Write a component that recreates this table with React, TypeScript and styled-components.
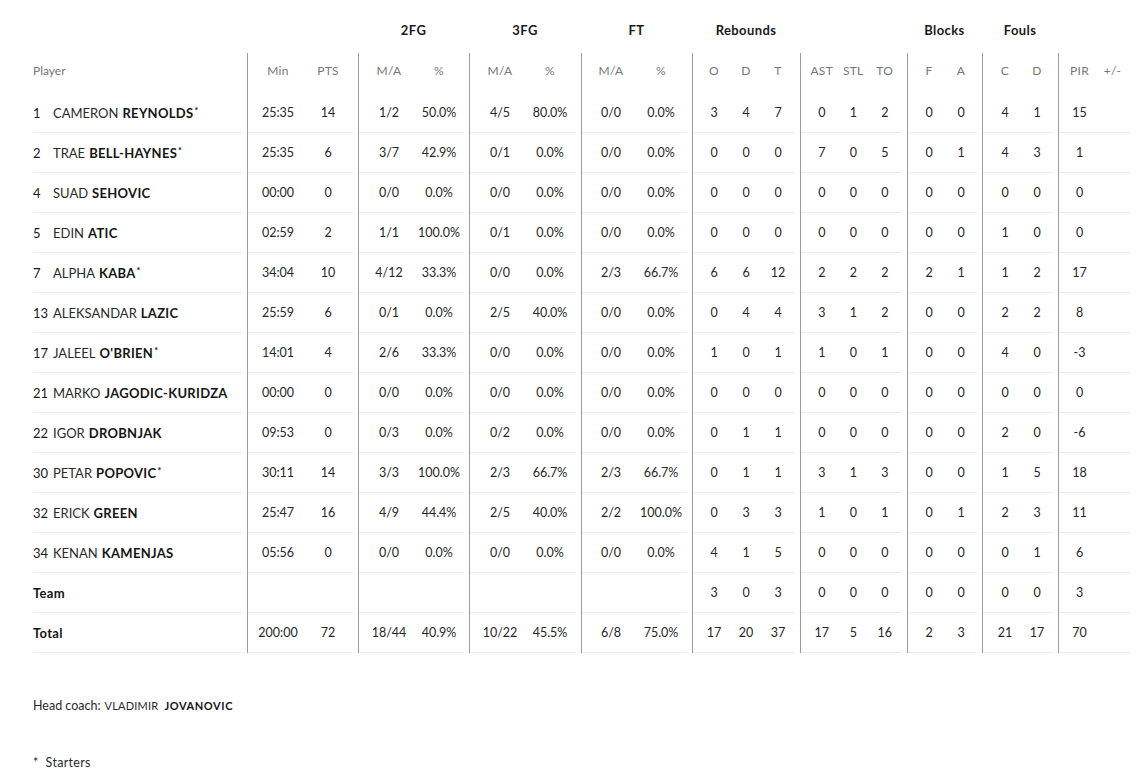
import React from "react";
import styled, { createGlobalStyle } from "styled-components";

const Global = createGlobalStyle`
  html, body { margin: 0; padding: 0; background: #fff; }
  body { font-family: Lato, "Noto Sans", "Liberation Sans", sans-serif; color: #1d1d1d; }
`;

type GroupDef = { label: string; w: number; cw: number; pl: number; cols: string[]; last?: boolean };

const groups: GroupDef[] = [
  { label: "", w: 111, cw: 50, pl: 5, cols: ["Min", "PTS"] },
  { label: "2FG", w: 111, cw: 50, pl: 5, cols: ["M/A", "%"] },
  { label: "3FG", w: 112, cw: 50, pl: 5, cols: ["M/A", "%"] },
  { label: "FT", w: 111, cw: 50, pl: 4, cols: ["M/A", "%"] },
  { label: "Rebounds", w: 108, cw: 32, pl: 5, cols: ["O", "D", "T"] },
  { label: "", w: 107, cw: 31.5, pl: 5, cols: ["AST", "STL", "TO"] },
  { label: "Blocks", w: 75, cw: 32, pl: 5, cols: ["F", "A"] },
  { label: "Fouls", w: 76, cw: 32, pl: 6, cols: ["C", "D"] },
  { label: "", w: 73, cw: 33, pl: 4, cols: ["PIR", "+/-"], last: true },
];

type Player = { no: string; first: string; last: string; starter?: boolean; v: string[] };

const players: Player[] = [
  { no: "1", first: "CAMERON", last: "REYNOLDS", starter: true, v: ["25:35", "14", "1/2", "50.0%", "4/5", "80.0%", "0/0", "0.0%", "3", "4", "7", "0", "1", "2", "0", "0", "4", "1", "15", ""] },
  { no: "2", first: "TRAE", last: "BELL-HAYNES", starter: true, v: ["25:35", "6", "3/7", "42.9%", "0/1", "0.0%", "0/0", "0.0%", "0", "0", "0", "7", "0", "5", "0", "1", "4", "3", "1", ""] },
  { no: "4", first: "SUAD", last: "SEHOVIC", v: ["00:00", "0", "0/0", "0.0%", "0/0", "0.0%", "0/0", "0.0%", "0", "0", "0", "0", "0", "0", "0", "0", "0", "0", "0", ""] },
  { no: "5", first: "EDIN", last: "ATIC", v: ["02:59", "2", "1/1", "100.0%", "0/1", "0.0%", "0/0", "0.0%", "0", "0", "0", "0", "0", "0", "0", "0", "1", "0", "0", ""] },
  { no: "7", first: "ALPHA", last: "KABA", starter: true, v: ["34:04", "10", "4/12", "33.3%", "0/0", "0.0%", "2/3", "66.7%", "6", "6", "12", "2", "2", "2", "2", "1", "1", "2", "17", ""] },
  { no: "13", first: "ALEKSANDAR", last: "LAZIC", v: ["25:59", "6", "0/1", "0.0%", "2/5", "40.0%", "0/0", "0.0%", "0", "4", "4", "3", "1", "2", "0", "0", "2", "2", "8", ""] },
  { no: "17", first: "JALEEL", last: "O'BRIEN", starter: true, v: ["14:01", "4", "2/6", "33.3%", "0/0", "0.0%", "0/0", "0.0%", "1", "0", "1", "1", "0", "1", "0", "0", "4", "0", "-3", ""] },
  { no: "21", first: "MARKO", last: "JAGODIC-KURIDZA", v: ["00:00", "0", "0/0", "0.0%", "0/0", "0.0%", "0/0", "0.0%", "0", "0", "0", "0", "0", "0", "0", "0", "0", "0", "0", ""] },
  { no: "22", first: "IGOR", last: "DROBNJAK", v: ["09:53", "0", "0/3", "0.0%", "0/2", "0.0%", "0/0", "0.0%", "0", "1", "1", "0", "0", "0", "0", "0", "2", "0", "-6", ""] },
  { no: "30", first: "PETAR", last: "POPOVIC", starter: true, v: ["30:11", "14", "3/3", "100.0%", "2/3", "66.7%", "2/3", "66.7%", "0", "1", "1", "3", "1", "3", "0", "0", "1", "5", "18", ""] },
  { no: "32", first: "ERICK", last: "GREEN", v: ["25:47", "16", "4/9", "44.4%", "2/5", "40.0%", "2/2", "100.0%", "0", "3", "3", "1", "0", "1", "0", "1", "2", "3", "11", ""] },
  { no: "34", first: "KENAN", last: "KAMENJAS", v: ["05:56", "0", "0/0", "0.0%", "0/0", "0.0%", "0/0", "0.0%", "4", "1", "5", "0", "0", "0", "0", "0", "0", "1", "6", ""] },
];

const teamRow = ["", "", "", "", "", "", "", "", "3", "0", "3", "0", "0", "0", "0", "0", "0", "0", "3", ""];
const totalRow = ["200:00", "72", "18/44", "40.9%", "10/22", "45.5%", "6/8", "75.0%", "17", "20", "37", "17", "5", "16", "2", "3", "21", "17", "70", ""];

const Page = styled.div`
  padding: 10px 0 0 33px;
  width: 1139px;
  box-sizing: border-box;
`;

const Table = styled.div`
  display: flex;
  flex-direction: column;
`;

const TitleRow = styled.div`
  display: flex;
  height: 40px;
  margin-bottom: 3px;
`;

const TitleSpacer = styled.div`
  width: 214px;
`;

const GroupTitle = styled.div<{ $w: number }>`
  width: ${(p) => p.$w}px;
  display: flex;
  align-items: center;
  justify-content: center;
  font-size: 13px;
  font-weight: 700;
  letter-spacing: 0.4px;
  color: #1a1a1a;
`;

const Row = styled.div`
  display: flex;
  height: 40px;
`;

const PlayerCell = styled.div`
  width: 214px;
  padding-right: 5px;
  box-sizing: border-box;
`;

const Inner = styled.div<{ $lined: boolean; $pl?: number }>`
  height: 100%;
  box-sizing: border-box;
  display: flex;
  align-items: center;
  padding-left: ${(p) => p.$pl ?? 0}px;
  padding-bottom: ${(p) => (p.$lined ? 0 : 4)}px;
  border-bottom: 1px solid ${(p) => (p.$lined ? "#ededed" : "transparent")};
`;

const Group = styled.div<{ $w: number; $last?: boolean }>`
  width: ${(p) => p.$w}px;
  border-left: 1px solid #9c9c9c;
  padding-right: ${(p) => (p.$last ? 0 : 5)}px;
  box-sizing: border-box;
`;

const Cell = styled.div<{ $w: number; $head?: boolean }>`
  width: ${(p) => p.$w}px;
  flex: none;
  text-align: center;
  white-space: nowrap;
  font-size: ${(p) => (p.$head ? 12 : 12.5)}px;
  color: ${(p) => (p.$head ? "#777" : "#262626")};
  letter-spacing: ${(p) => (p.$head ? "0.3px" : "0")};
`;

const HeadLabel = styled.span`
  font-size: 12px;
  color: #777;
`;

const Num = styled.span`
  display: inline-block;
  width: 20px;
  font-size: 13px;
  color: #1a1a1a;
`;

const First = styled.span`
  font-size: 13px;
  color: #2a2a2a;
`;

const Last = styled.span`
  font-size: 13px;
  font-weight: 700;
  color: #151515;
  letter-spacing: 0.3px;
  margin-left: 4px;
`;

const Star = styled.sup`
  font-size: 9px;
  font-weight: 700;
  vertical-align: 4px;
  line-height: 0;
  margin-left: 1px;
`;

const RowLabel = styled.span`
  font-size: 13px;
  font-weight: 700;
  color: #151515;
  letter-spacing: 0.3px;
`;

const Coach = styled.div`
  margin-top: 45px;
  font-size: 12.5px;
  color: #2a2a2a;
  display: flex;
  align-items: baseline;
  gap: 4px;
`;

const CoachFirst = styled.span`
  font-size: 11px;
  letter-spacing: 0.2px;
`;

const CoachLast = styled.span`
  font-size: 11px;
  font-weight: 700;
  letter-spacing: 0.6px;
  color: #151515;
  margin-left: 2px;
`;

const Starters = styled.div`
  margin-top: 42px;
  font-size: 12.5px;
  color: #2a2a2a;
  letter-spacing: 0.3px;
`;

function GroupCells({ values, head, lined }: { values: string[]; head?: boolean; lined: boolean }) {
  let i = 0;
  return (
    <>
      {groups.map((g, gi) => {
        const cells = g.cols.map((c) => {
          const val = head ? c : values[i];
          i++;
          return (
            <Cell key={c + i} $w={g.cw} $head={head}>
              {val}
            </Cell>
          );
        });
        return (
          <Group key={gi} $w={g.w} $last={g.last}>
            <Inner $lined={lined} $pl={g.pl}>
              {cells}
            </Inner>
          </Group>
        );
      })}
    </>
  );
}

export default function App() {
  return (
    <>
      <Global />
      <Page>
        <Table>
          <TitleRow>
            <TitleSpacer />
            {groups.map((g, i) => (
              <GroupTitle key={i} $w={g.w}>
                {g.label}
              </GroupTitle>
            ))}
          </TitleRow>
          <Row>
            <PlayerCell>
              <Inner $lined={false}>
                <HeadLabel>Player</HeadLabel>
              </Inner>
            </PlayerCell>
            <GroupCells values={[]} head lined={false} />
          </Row>
          {players.map((p) => (
            <Row key={p.no}>
              <PlayerCell>
                <Inner $lined>
                  <Num>{p.no}</Num>
                  <First>{p.first}</First>
                  <Last>
                    {p.last}
                    {p.starter && <Star>*</Star>}
                  </Last>
                </Inner>
              </PlayerCell>
              <GroupCells values={p.v} lined />
            </Row>
          ))}
          <Row>
            <PlayerCell>
              <Inner $lined>
                <RowLabel>Team</RowLabel>
              </Inner>
            </PlayerCell>
            <GroupCells values={teamRow} lined />
          </Row>
          <Row>
            <PlayerCell>
              <Inner $lined>
                <RowLabel>Total</RowLabel>
              </Inner>
            </PlayerCell>
            <GroupCells values={totalRow} lined />
          </Row>
        </Table>
        <Coach>
          <span>Head coach:</span>
          <CoachFirst>VLADIMIR</CoachFirst>
          <CoachLast>JOVANOVIC</CoachLast>
        </Coach>
        <Starters>*&nbsp; Starters</Starters>
      </Page>
    </>
  );
}
